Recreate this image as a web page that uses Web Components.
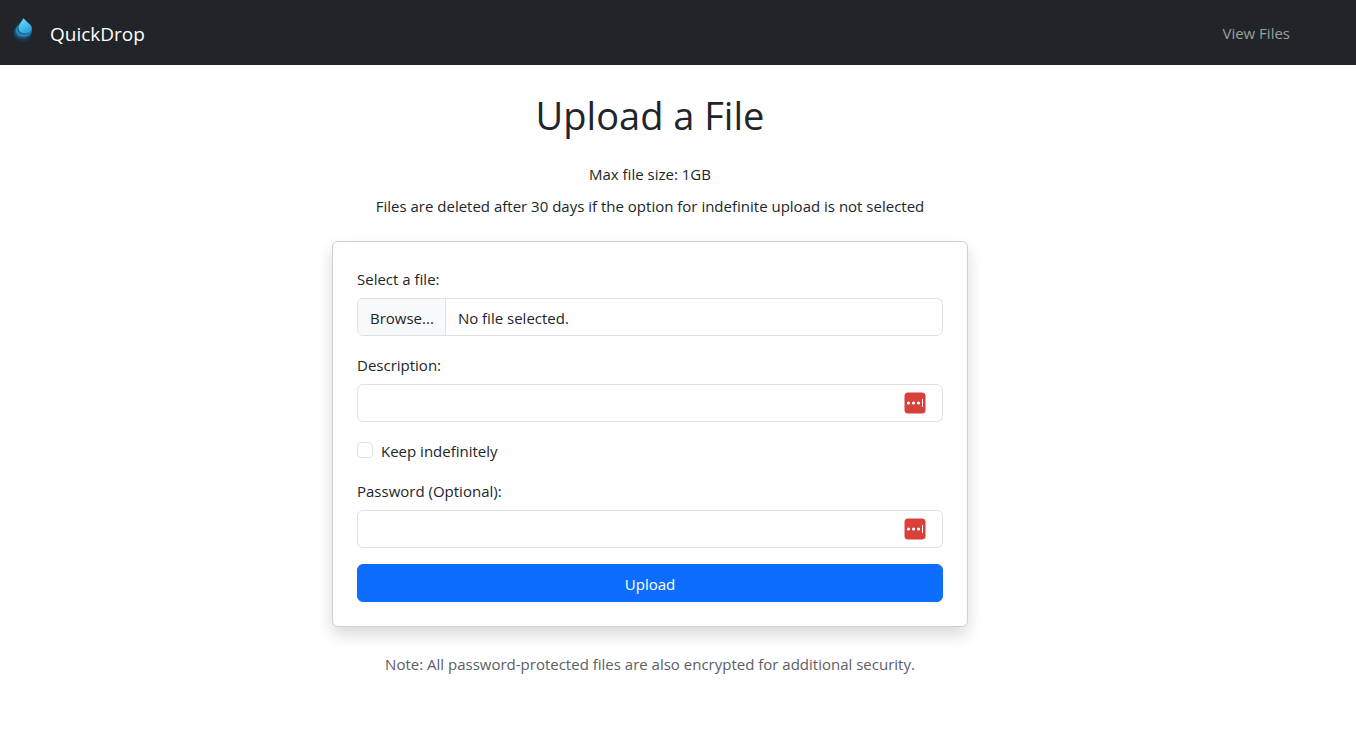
<!DOCTYPE html>
<html lang="en">
<head>
<meta charset="utf-8">
<meta name="viewport" content="width=device-width, initial-scale=1">
<title>QuickDrop</title>
<style>
  body {
    margin: 0;
    background: #fff;
    color: #212529;
    font: 15px/24px "Open Sans", "Noto Sans", sans-serif;
    --border: #dee2e6;
    --primary: #0d6efd;
    --title-size: 38px;
    --brand-size: 19px;
    --text-line: 26px;
  }
</style>
</head>
<body>
<qd-navbar>
  <qd-logo slot="logo"></qd-logo>
  QuickDrop
</qd-navbar>
<qd-page>
  <span slot="title">Upload a File</span>
  <span slot="limit">Max file size: 1GB</span>
  <span slot="retention">Files are deleted after 30 days if the option for indefinite upload is not selected</span>
  <qd-upload-form></qd-upload-form>
  <span slot="note">Note: All password-protected files are also encrypted for additional security.</span>
</qd-page>

<script>
const define = (name, html, setup) => {
  const template = document.createElement('template');
  template.innerHTML = html;
  customElements.define(name, class extends HTMLElement {
    constructor() {
      super();
      this.attachShadow({ mode: 'open' }).append(template.content.cloneNode(true));
      if (setup) setup(this, this.shadowRoot);
    }
  });
};

define('qd-logo', `
  <style>
    :host { display: block; width: 20px; height: 24px; }
    svg { display: block; }
  </style>
  <svg width="20" height="24" viewBox="0 0 20 24" aria-hidden="true">
    <defs>
      <linearGradient id="drop" x1="0" y1="0" x2=".5" y2="1">
        <stop offset="0" stop-color="#6be4f8"/>
        <stop offset="1" stop-color="#2ba4de"/>
      </linearGradient>
    </defs>
    <path d="M8 5C4 8 .3 10.500 .3 15C.3 20 4.500 23.700 9.500 23.700S18.700 20 18.700 15C18.700 10.500 14 8 8 5Z" fill="#1b3446"/>
    <path d="M9 3C6 7 1.200 9.500 1.200 13.500C1.200 18 5 20.800 9.800 20.800S18.800 18 18.800 13C18.800 9 13 6 9 3Z" fill="#1d5379"/>
    <path d="M10 1C7 6 2.800 8.500 2.800 12.500C2.800 16.300 6.500 18.700 10.500 18.700S18.900 16 18.900 12C18.900 8 13 5 10 1Z" fill="#2c86c0"/>
    <path d="M10.500 .3C8.500 4 4.300 7 4.300 11C4.300 14.300 7.500 16.700 11.500 16.700S18.900 14 18.900 10.500C18.900 7 13 4 10.500 .3Z" fill="#1b6593"/>
    <path d="M10.500 .3C9 4 5.600 6.500 5.600 10C5.600 13.300 8.300 15.300 12 15.300S18.700 13 18.700 10C18.700 6.500 13 4 10.500 .3Z" fill="url(#drop)"/>
  </svg>`);

define('qd-navbar', `
  <style>
    :host { display: block; background: #212529; }
    nav { display: flex; align-items: center; justify-content: space-between; min-height: 65px; padding: 0 66px 0 13px; }
    a { text-decoration: none; }
    .brand { display: flex; align-items: center; gap: 17px; color: #fff; font-size: var(--brand-size); line-height: 32px; }
    .name { padding-top: 2px; }
    ::slotted(qd-logo) { margin-bottom: 6px; }
    .link { color: #9b9d9e; }
  </style>
  <nav>
    <a class="brand" href="#"><slot name="logo"></slot><span class="name"><slot></slot></span></a>
    <a class="link" href="#files">View Files</a>
  </nav>`);

define('qd-page', `
  <style>
    :host { display: block; padding: 24px 68px 24px 12px; text-align: center; }
    h1 { margin: 0 0 20px; font-size: var(--title-size); font-weight: 400; line-height: 52px; }
    p { margin: 0; line-height: var(--text-line); }
    .limit { margin-bottom: 6px; }
    .body { max-width: 636px; margin: 22px auto 24px; text-align: left; }
    .note { color: #5c6065; }
  </style>
  <main>
    <h1><slot name="title"></slot></h1>
    <p class="limit"><slot name="limit"></slot></p>
    <p><slot name="retention"></slot></p>
    <div class="body"><slot></slot></div>
    <p class="note"><slot name="note"></slot></p>
  </main>`);

define('qd-file-field', `
  <style>
    :host { display: block; }
    label { display: block; margin-bottom: 6px; line-height: var(--text-line); }
    .box { position: relative; display: flex; border: 1px solid var(--border); border-radius: 6px; overflow: hidden; }
    .box span { padding: 7px 12px 5px; }
    .box .browse { padding-right: 11px; background: #f8f9fa; border-right: 1px solid var(--border); }
    input { position: absolute; inset: 0; width: 100%; opacity: 0; cursor: pointer; }
    .box:focus-within { border-color: #86b7fe; }
  </style>
  <label for="file">Select a file:</label>
  <div class="box">
    <span class="browse" aria-hidden="true">Browse...</span>
    <span class="name">No file selected.</span>
    <input id="file" type="file">
  </div>`, (host, root) => {
    const input = root.querySelector('input');
    input.addEventListener('change', () => {
      root.querySelector('.name').textContent = input.files.length ? input.files[0].name : 'No file selected.';
    });
  });

define('qd-text-field', `
  <style>
    :host { display: block; }
    label { display: block; margin-bottom: 6px; line-height: var(--text-line); }
    .box { display: flex; align-items: center; box-sizing: border-box; height: 38px; padding-right: 16px; border: 1px solid var(--border); border-radius: 6px; }
    .box:focus-within { border-color: #86b7fe; }
    input { flex: 1; min-width: 0; padding: 6px 12px; border: 0; outline: 0; background: none; color: inherit; font: inherit; }
    svg { flex: none; }
  </style>
  <label for="field"><slot></slot></label>
  <div class="box">
    <input id="field" type="text">
    <svg width="22" height="22" viewBox="0 0 22 22" aria-hidden="true">
      <rect x=".5" y=".5" width="21" height="21" rx="3.500" fill="#d8403a"/>
      <g fill="#fff">
        <circle cx="4.500" cy="11" r="1.600"/>
        <circle cx="9.500" cy="11" r="1.600"/>
        <circle cx="14.500" cy="11" r="1.600"/>
        <rect x="18" y="7" width="1" height="8"/>
      </g>
    </svg>
  </div>`, (host, root) => {
    root.querySelector('input').type = host.getAttribute('type') || 'text';
  });

define('qd-checkbox', `
  <style>
    :host { display: flex; gap: 8px; height: 24px; }
    label { line-height: var(--text-line); }
    input { appearance: none; flex: none; width: 16px; height: 16px; margin: 4px 0 0; border: 1px solid var(--border); border-radius: 4px; background: #fff; }
    input:checked { background: var(--primary); border-color: var(--primary); }
  </style>
  <input id="check" type="checkbox">
  <label for="check"><slot></slot></label>`);

define('qd-button', `
  <style>
    :host { display: block; }
    button { display: block; width: 100%; padding: 7px 12px 5px; border: 1px solid var(--primary); border-radius: 6px; background: var(--primary); color: #fff; font: inherit; cursor: pointer; }
  </style>
  <button type="button"><slot></slot></button>`);

define('qd-upload-form', `
  <style>
    :host { display: block; border: 1px solid #cfd0d1; border-radius: 6px; background: #fff; box-shadow: 0 8px 16px rgba(0, 0, 0, .15); }
    form { display: flex; flex-direction: column; gap: 16px; padding: 24px; }
  </style>
  <form>
    <qd-file-field></qd-file-field>
    <qd-text-field>Description:</qd-text-field>
    <qd-checkbox>Keep indefinitely</qd-checkbox>
    <qd-text-field type="password">Password (Optional):</qd-text-field>
    <qd-button>Upload</qd-button>
  </form>`);
</script>
</body>
</html>
